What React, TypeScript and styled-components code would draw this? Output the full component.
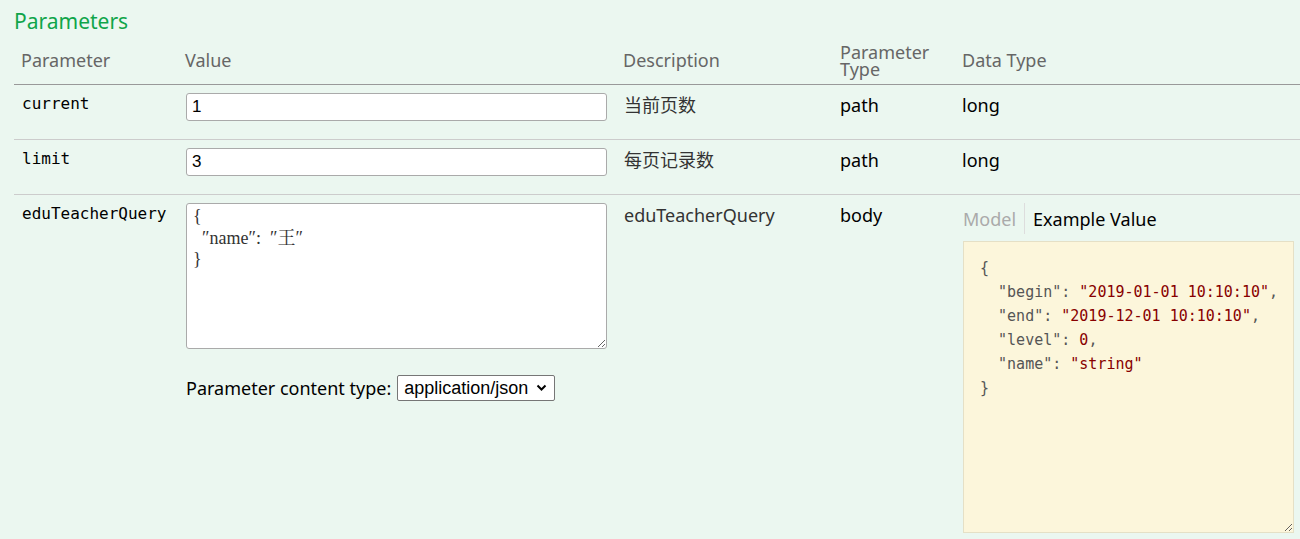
import React from "react";
import styled, { createGlobalStyle } from "styled-components";

const Global = createGlobalStyle`
  html, body { margin: 0; padding: 0; background: #ebf7f0; }
  body { font-family: "Noto Sans", "Noto Sans CJK SC", sans-serif; }
`;

const Page = styled.div`
  background: #ebf7f0;
  min-height: 539px;
  padding: 0 0 0 14px;
  box-sizing: border-box;
  overflow: hidden;
`;

const Title = styled.h4`
  margin: 0;
  padding: 7px 0 0 0;
  height: 32px;
  font-size: 21px;
  font-weight: 400;
  line-height: 28px;
  color: #10a54a;
`;

const cols = "164px 438px 217px 122px 1fr";

const HeadRow = styled.div`
  display: grid;
  grid-template-columns: ${cols};
  align-items: center;
  height: 46px;
  border-bottom: 1px solid #999;
  box-sizing: border-box;
`;

const HeadCell = styled.div`
  padding: 0 7px 2px;
  font-size: 18px;
  line-height: 17px;
  color: #666;
`;

const Row = styled.div<{ $last?: boolean }>`
  display: grid;
  grid-template-columns: ${cols};
  border-bottom: ${(p) => (p.$last ? "none" : "1px solid #ccc")};
`;

const Cell = styled.div<{ $pb?: number }>`
  padding: 8px 7px ${(p) => (p.$pb ?? 18)}px;
  min-width: 0;
`;

const Code = styled.div`
  font-family: "DejaVu Sans Mono", "Liberation Mono", monospace;
  font-size: 16px;
  line-height: 22px;
  color: #000;
  padding-left: 1px;
`;

const Desc = styled.div`
  font-size: 18px;
  line-height: 25px;
  color: #333;
  padding-left: 1px;
`;

const Plain = styled.div`
  font-size: 18px;
  line-height: 25px;
  color: #000;
`;

const TextInput = styled.input`
  display: block;
  box-sizing: border-box;
  width: 421px;
  height: 28px;
  margin: 0 0 0 1px;
  padding: 0 5px;
  border: 1px solid #aaa;
  border-radius: 3px;
  background: #fff;
  font-family: "Liberation Sans", Arial, sans-serif;
  font-size: 17px;
  color: #000;
  outline: none;
`;

const TextArea = styled.textarea`
  display: block;
  box-sizing: border-box;
  width: 421px;
  height: 146px;
  margin: 0 0 0 1px;
  padding: 2px 6px;
  border: 1px solid #aaa;
  border-radius: 3px;
  background: #fff;
  font-family: "Liberation Serif", "Noto Serif CJK SC", "Noto Sans CJK SC", serif;
  font-size: 18px;
  line-height: 21.5px;
  color: #333;
  outline: none;
`;

const ContentType = styled.div`
  display: flex;
  align-items: center;
  gap: 6px;
  margin: 26px 0 0 1px;
  font-size: 18px;
  color: #000;
`;

const SelectWrap = styled.span`
  position: relative;
  display: inline-flex;
`;

const Select = styled.select`
  appearance: none;
  -webkit-appearance: none;
  height: 26px;
  width: 158px;
  box-sizing: border-box;
  padding: 0 24px 0 6px;
  border: 1px solid #767676;
  border-radius: 2px;
  background: #fff;
  font-family: "Liberation Sans", Arial, sans-serif;
  font-size: 18px;
  color: #000;
`;

const Chevron = styled.svg`
  position: absolute;
  right: 8px;
  top: 9px;
  width: 11px;
  height: 8px;
  pointer-events: none;
`;

const Tabs = styled.div`
  display: flex;
  height: 31px;
  align-items: stretch;
  margin-bottom: 7px;
`;

const Tab = styled.div<{ $active?: boolean }>`
  display: flex;
  align-items: center;
  padding: ${(p) => (p.$active ? "0 0 0 8px" : "0 8px 0 1px")};
  border-left: ${(p) => (p.$active ? "1px solid #ddd" : "none")};
  font-size: 18px;
  color: ${(p) => (p.$active ? "#000" : "#aaa")};
`;

const Sample = styled.pre`
  margin: 0 0 0 1px;
  box-sizing: border-box;
  width: 331px;
  height: 292px;
  padding: 14px 16px;
  background: #fcf6db;
  border: 1px solid #e5e0c6;
  font-family: "DejaVu Sans Mono", "Liberation Mono", monospace;
  font-size: 15px;
  line-height: 24px;
  color: #555;
  resize: both;
  overflow: auto;
  white-space: pre;
`;

const Str = styled.span`
  color: #880000;
`;

const Num = styled.span`
  color: #880000;
`;

export default function App() {
  return (
    <>
      <Global />
      <Page>
        <Title>Parameters</Title>
        <HeadRow>
          <HeadCell>Parameter</HeadCell>
          <HeadCell>Value</HeadCell>
          <HeadCell>Description</HeadCell>
          <HeadCell>
            Parameter
            <br />
            Type
          </HeadCell>
          <HeadCell>Data Type</HeadCell>
        </HeadRow>

        <Row>
          <Cell>
            <Code>current</Code>
          </Cell>
          <Cell>
            <TextInput defaultValue="1" />
          </Cell>
          <Cell>
            <Desc>当前页数</Desc>
          </Cell>
          <Cell>
            <Plain>path</Plain>
          </Cell>
          <Cell>
            <Plain>long</Plain>
          </Cell>
        </Row>

        <Row>
          <Cell>
            <Code>limit</Code>
          </Cell>
          <Cell>
            <TextInput defaultValue="3" />
          </Cell>
          <Cell>
            <Desc>每页记录数</Desc>
          </Cell>
          <Cell>
            <Plain>path</Plain>
          </Cell>
          <Cell>
            <Plain>long</Plain>
          </Cell>
        </Row>

        <Row $last>
          <Cell>
            <Code>eduTeacherQuery</Code>
          </Cell>
          <Cell>
            <TextArea defaultValue={"{\n  ″name″:  ″王″\n}"} />
            <ContentType>
              <span>Parameter content type:</span>
              <SelectWrap>
                <Select defaultValue="application/json">
                  <option value="application/json">application/json</option>
                </Select>
                <Chevron viewBox="0 0 11 8">
                  <path d="M1.5 1.5 L5.5 5.5 L9.5 1.5" fill="none" stroke="#000" strokeWidth="2" />
                </Chevron>
              </SelectWrap>
            </ContentType>
          </Cell>
          <Cell>
            <Desc>eduTeacherQuery</Desc>
          </Cell>
          <Cell>
            <Plain>body</Plain>
          </Cell>
          <Cell $pb={6}>
            <Tabs>
              <Tab>Model</Tab>
              <Tab $active>Example Value</Tab>
            </Tabs>
            <Sample>
              {"{\n  "}
              "begin": <Str>"2019-01-01 10:10:10"</Str>
              {",\n  "}
              "end": <Str>"2019-12-01 10:10:10"</Str>
              {",\n  "}
              "level": <Num>0</Num>
              {",\n  "}
              "name": <Str>"string"</Str>
              {"\n}"}
            </Sample>
          </Cell>
        </Row>
      </Page>
    </>
  );
}
